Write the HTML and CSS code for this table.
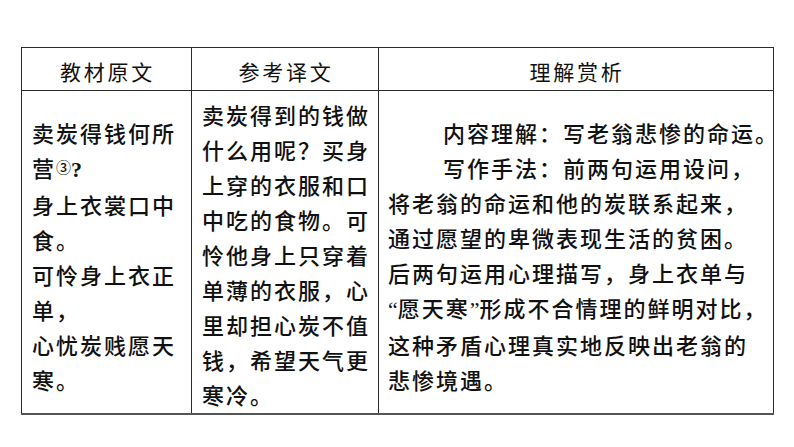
FILE: index.html
```html
<!DOCTYPE html>
<html lang="zh-CN">
<head>
<meta charset="utf-8">
<title>卖炭翁 理解赏析</title>
<link rel="stylesheet" href="styles.css">
</head>
<body>
<table class="grid">
  <colgroup>
    <col class="c1">
    <col class="c2">
    <col class="c3">
  </colgroup>
  <thead>
    <tr>
      <th>教材原文</th>
      <th>参考译文</th>
      <th>理解赏析</th>
    </tr>
  </thead>
  <tbody>
    <tr>
      <td class="orig">卖炭得钱何所<br>营<span class="note">③</span><span class="half">?</span><br>身上衣裳口中<br>食。<br>可怜身上衣正<br>单，<br>心忧炭贱愿天<br>寒。</td>
      <td class="trans">卖炭得到的钱做<br>什么用呢？买身<br>上穿的衣服和口<br>中吃的食物。可<br>怜他身上只穿着<br>单薄的衣服，心<br>里却担心炭不值<br>钱，希望天气更<br>寒冷。</td>
      <td class="analysis">
        <p class="para">内容理解：写老翁悲惨的命运。</p>
        <p class="para">写作手法：前两句运用设问，<br>将老翁的命运和他的炭联系起来，<br>通过愿望的卑微表现生活的贫困。<br>后两句运用心理描写，身上衣单与<br><span class="q">“</span>愿天寒<span class="q">”</span>形成不合情理的鲜明对比，<br>这种矛盾心理真实地反映出老翁的<br>悲惨境遇。</p>
      </td>
    </tr>
  </tbody>
</table>
</body>
</html>
```
FILE: styles.css
```css
html, body {
  margin: 0;
  padding: 0;
  background: #ffffff;
}

body {
  font-family: "Noto Sans CJK SC", "Noto Sans", sans-serif;
  color: #111111;
}

.grid {
  margin: 47px 0 0 21px;
  width: 752px;
  border-collapse: collapse;
  table-layout: fixed;
}

.c1 { width: 170px; }
.c2 { width: 187px; }
.c3 { width: 395px; }

.grid th,
.grid td {
  border: 1px solid #2a2a2a;
}

.grid tbody td {
  border-bottom: 2px solid #555555;
}

.grid th {
  font-weight: 400;
  font-size: 21px;
  letter-spacing: 2.7px;
  line-height: 35px;
  padding: 6px 0 1px 2px;
  text-align: center;
}

.grid td {
  font-size: 22px;
  font-weight: 500;
  letter-spacing: 2px;
  line-height: 35px;
  white-space: nowrap;
  text-align: left;
}

.orig {
  vertical-align: middle;
  padding: 8px 0 0 10px;
}

.trans {
  vertical-align: top;
  padding: 6px 0 1px 10px;
  letter-spacing: 1.7px;
}

.analysis {
  vertical-align: middle;
  padding: 8px 0 0 9px;
}

.para {
  margin: 0;
  text-indent: 55px;
}

.note {
  font-size: 15px;
  letter-spacing: 0;
  vertical-align: 4px;
  line-height: 1;
}

.half {
  font-family: "Liberation Serif", serif;
  letter-spacing: 0;
  font-weight: 700;
}

.q {
  font-family: "Liberation Serif", serif;
  letter-spacing: 0;
}
```
